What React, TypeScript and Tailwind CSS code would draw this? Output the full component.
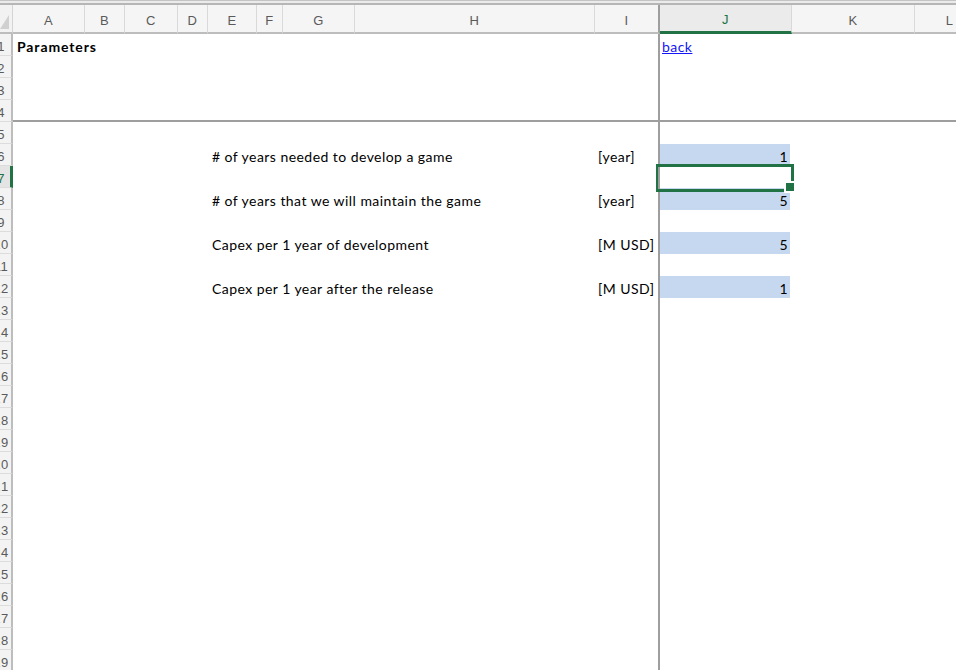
import type { ReactNode } from 'react';

type Col = { key: string; cls: string };

const COLS: Col[] = [
    { key: 'A', cls: 'w-[72px]' },
    { key: 'B', cls: 'w-[40px]' },
    { key: 'C', cls: 'w-[53px]' },
    { key: 'D', cls: 'w-[30px]' },
    { key: 'E', cls: 'w-[49px]' },
    { key: 'F', cls: 'w-[26px]' },
    { key: 'G', cls: 'w-[72px]' },
    { key: 'H', cls: 'w-[240px]' },
    { key: 'I', cls: 'w-[65px]' },
    { key: 'J', cls: 'w-[132px]' },
    { key: 'K', cls: 'w-[123px]' },
    { key: 'L', cls: 'w-[70px]' },
];

type Param = { row: number; label: string; unit: string; value: number };

const PARAMS: Param[] = [
    { row: 6, label: '# of years needed to develop a game', unit: '[year]', value: 1 },
    { row: 8, label: '# of years that we will maintain the game', unit: '[year]', value: 5 },
    { row: 10, label: 'Capex per 1 year of development', unit: '[M USD]', value: 5 },
    { row: 12, label: 'Capex per 1 year after the release', unit: '[M USD]', value: 1 },
];

const ROWS = Array.from({ length: 29 }, (_, i) => i + 1);
const SELECTED_ROW = 7;

function cellContent(row: number, col: string): ReactNode {
    if (row === 1 && col === 'A') {
        return <span className="pb-[1px] pl-[4px] font-bold tracking-[0.9px]">Parameters</span>;
    }
    if (row === 1 && col === 'J') {
        return <span className="pb-[1px] pl-[2px] text-[#1515f5] underline">back</span>;
    }

    const param = PARAMS.find((p) => p.row === row);
    if (!param) return null;

    if (col === 'E') return <span className="pb-[1px] pl-[4px]">{param.label}</span>;
    if (col === 'I') return <span className="pb-[1px] pl-[3px]">{param.unit}</span>;
    if (col === 'J') {
        return (
            <div className="flex h-full w-[130px] items-end justify-end bg-[#c6d8f0] pr-[2px] pb-[1px]">
                {param.value}
            </div>
        );
    }
    return null;
}

function ColumnHeader() {
    return (
        <div className="flex h-[29px] bg-[#f5f5f5] font-['Liberation_Sans',Arial,sans-serif] text-[13px] text-[#5a5a5a]">
            <div className="relative w-[13px] shrink-0 border-r border-b-2 border-r-[#d4d4d4] border-b-[#bdbdbd] bg-[#f2f2f2]">
                <svg className="absolute bottom-[3px] left-0" width="9" height="14" viewBox="0 0 9 14">
                    <polygon points="9,0 9,14 0,14" fill="#d0d0d0" />
                </svg>
            </div>
            {COLS.map((col) => {
                const isSelected = col.key === 'J';
                const isFreeze = col.key === 'I';
                return (
                    <div
                        key={col.key}
                        className={`${col.cls} flex shrink-0 items-center justify-center pt-[4px] ${
                            isFreeze ? 'border-r-2 border-r-[#9e9e9e]' : 'border-r border-r-[#d9d9d9]'
                        } ${
                            isSelected
                                ? 'border-b-[3px] border-b-[#217346] bg-[#ebebeb] text-[#217346]'
                                : 'border-b-2 border-b-[#bdbdbd]'
                        }`}
                    >
                        {col.key}
                    </div>
                );
            })}
        </div>
    );
}

function SheetRow({ row }: { row: number }) {
    const isSelected = row === SELECTED_ROW;
    const isFreeze = row === 4;

    return (
        <div className="flex h-[22px]">
            <div
                className={`w-[13px] shrink-0 overflow-hidden border-b border-b-[#dcdcdc] font-['Liberation_Sans',Arial,sans-serif] text-[13px] ${
                    isSelected
                        ? 'border-r-[3px] border-r-[#217346] bg-[#e4e4e4] text-[#217346]'
                        : 'border-r-2 border-r-[#bdbdbd] bg-[#f3f3f3] text-[#5a5a5a]'
                }`}
            >
                <div className="-ml-[13px] flex h-full w-[28px] items-center justify-center pt-[5px]">{row}</div>
            </div>
            {COLS.map((col) => (
                <div
                    key={col.key}
                    className={`${col.cls} flex shrink-0 items-end whitespace-nowrap ${
                        col.key === 'I' ? 'border-r-2 border-r-[#9e9e9e]' : ''
                    } ${isFreeze ? 'border-b-2 border-b-[#9e9e9e]' : ''}`}
                >
                    {cellContent(row, col.key)}
                </div>
            ))}
        </div>
    );
}

export default function App() {
    return (
        <div className="relative h-[670px] w-[956px] overflow-hidden bg-white font-['Lato',sans-serif] text-[14px] leading-[16px] tracking-[0.45px] text-black">
            <div className="h-[1px] bg-[#c4c4c4]" />
            <div className="h-[2px] bg-[#ebebeb]" />
            <div className="h-[2px] bg-[#b6b6b6]" />
            <ColumnHeader />
            {ROWS.map((row) => (
                <SheetRow key={row} row={row} />
            ))}

            {/* active cell J7 */}
            <div className="absolute left-[656px] top-[164px] h-[28px] w-[138px] border-y-[3px] border-r-[3px] border-l-2 border-[#217346]" />
            <div className="absolute left-[784px] top-[181px] h-[12px] w-[12px] border-2 border-white bg-[#217346]" />
        </div>
    );
}
